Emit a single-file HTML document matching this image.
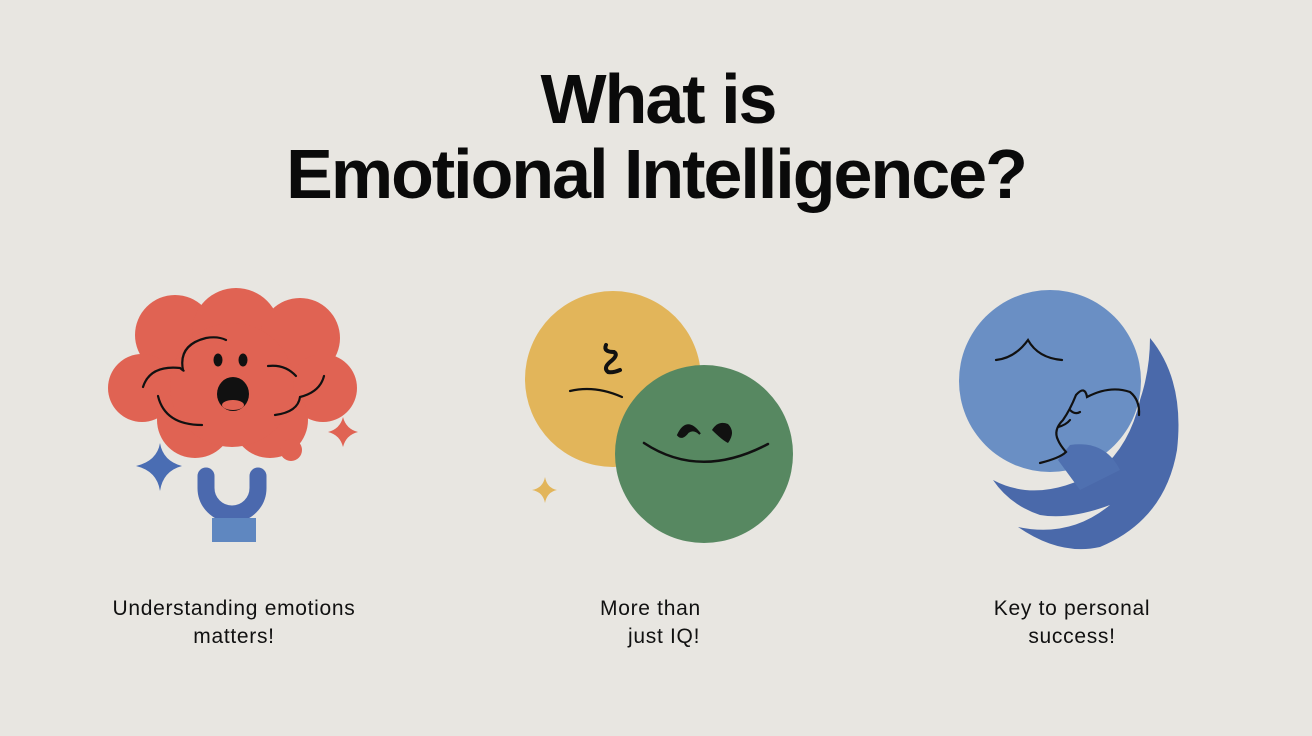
<!DOCTYPE html>
<html><head><meta charset="utf-8"><style>
html,body{margin:0;padding:0}
body{width:1312px;height:736px;background:#e8e6e1;position:relative;overflow:hidden;font-family:"Liberation Sans",sans-serif;color:#0a0a0a}
.t{position:absolute;left:0;width:1312px;text-align:center;font-weight:bold;font-size:70px;letter-spacing:-2px;line-height:1}
.c{position:absolute;font-size:21px;line-height:28px;text-align:center;color:#111;letter-spacing:0.7px}
svg{position:absolute;left:0;top:0}
</style></head><body>
<div class="t" style="top:64px;left:2px">What is</div>
<div class="t" style="top:139px">Emotional Intelligence?</div>
<svg width="1312" height="736" viewBox="0 0 1312 736">
<g fill="#e06353">
<circle cx="175" cy="335" r="40"/><circle cx="236" cy="332" r="44"/><circle cx="300" cy="338" r="40"/>
<circle cx="142" cy="388" r="34"/><circle cx="323" cy="388" r="34"/>
<circle cx="195" cy="420" r="38"/><circle cx="270" cy="420" r="38"/>
<circle cx="232" cy="385" r="62"/>
<circle cx="291" cy="450" r="11"/>
<path d="M343 417 Q346 429 358 432 Q346 435 343 447 Q340 435 328 432 Q340 429 343 417Z"/>
</g>
<g fill="none" stroke="#111" stroke-width="2.2" stroke-linecap="round">
<path d="M143 387 Q150 365 180 368 Q185 372 183 370 Q178 345 206 338 Q218 336 226 340"/>
<path d="M158 396 Q165 425 202 425"/>
<path d="M268 366 Q285 364 296 376"/>
<path d="M324 376 Q320 392 300 397 Q298 412 275 415"/>
</g>
<ellipse cx="218" cy="360" rx="4.5" ry="6.5" fill="#111"/><ellipse cx="243" cy="360" rx="4.5" ry="6.5" fill="#111"/>
<ellipse cx="233" cy="394" rx="16" ry="17" fill="#111"/>
<ellipse cx="233" cy="405" rx="11" ry="5" fill="#e06353"/>
<path d="M160 443 Q163 461 182 466 Q163 471 160 491 Q157 471 136 466 Q157 461 160 443Z" fill="#4a6db3"/>
<path d="M206 476 V488 A26 26 0 0 0 258 488 V476" fill="none" stroke="#4b69ae" stroke-width="17" stroke-linecap="round"/>
<rect x="212" y="518" width="44" height="24" fill="#5f87c0"/>
<circle cx="613" cy="379" r="88" fill="#e2b55a"/>
<path d="M570 391 Q595 385 622 397" fill="none" stroke="#111" stroke-width="2.2" stroke-linecap="round"/>
<path d="M606 345 Q603 352 614 352 Q619 355 610 362 Q603 368 608 372 Q613 373 620 370" fill="none" stroke="#111" stroke-width="4" stroke-linecap="round"/>
<circle cx="704" cy="454" r="89" fill="#578861"/>
<path d="M644 443 Q700 480 768 444" fill="none" stroke="#111" stroke-width="2.5" stroke-linecap="round"/>
<path d="M678 435 Q687 416 700 434 Q694 428 688 432 Q682 440 678 435Z" fill="#111" stroke="#111" stroke-width="2"/>
<path d="M712 430 Q718 420 728 424 Q736 432 728 443 Q722 440 712 430Z" fill="#111"/>
<path d="M545 477 Q547 488 557 490 Q547 492 545 503 Q543 492 532 490 Q543 488 545 477Z" fill="#e2b55a"/>
<circle cx="1050" cy="381" r="91" fill="#6a8fc4"/>
<path d="M1150 338 Q1185 380 1177 450 Q1165 520 1100 547 Q1060 556 1018 527 Q1070 538 1110 505 Q1070 520 1040 515 Q1010 505 993 480 Q1040 505 1100 470 Q1130 445 1140 400 Q1150 370 1150 338Z" fill="#4a69aa"/>
<path d="M1070 445 Q1105 440 1120 470 Q1100 480 1080 490 L1058 460Z" fill="#4f70b0"/>
<g fill="none" stroke="#111" stroke-width="2.2" stroke-linecap="round">
<path d="M996 360 Q1015 358 1028 340 Q1038 358 1062 360"/>
<path d="M1040 463 Q1060 458 1066 452 Q1060 445 1058 440 Q1053 430 1063 420 Q1070 410 1076 395 Q1085 385 1087 397 Q1110 385 1130 392 Q1140 400 1139 415"/>
<path d="M1070 410 Q1075 415 1080 412"/>
<path d="M1058 427 Q1066 425 1070 420"/>
</g>
</svg>
<div class="c" style="left:84px;top:595px;width:300px">Understanding emotions<br>matters!</div>
<div class="c" style="left:560px;top:595px;width:186px;text-align:left;padding-left:40px">More than<br><span style="padding-left:28px">just IQ!</span></div>
<div class="c" style="left:922px;top:595px;width:300px">Key to personal<br>success!</div>
</body></html>
